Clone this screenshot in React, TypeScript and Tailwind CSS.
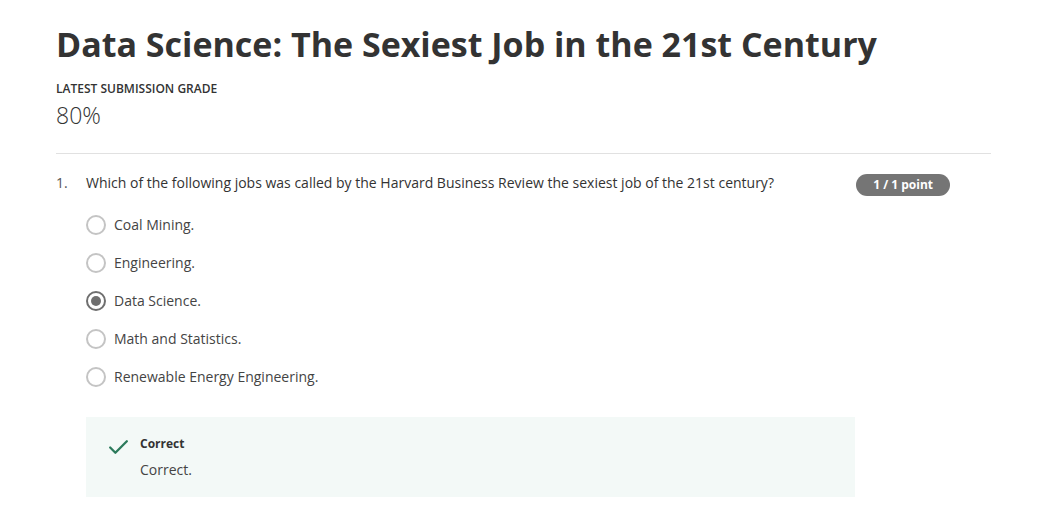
import { Check } from "lucide-react";

const options = [
  { label: "Coal Mining.", checked: false },
  { label: "Engineering.", checked: false },
  { label: "Data Science.", checked: true },
  { label: "Math and Statistics.", checked: false },
  { label: "Renewable Energy Engineering.", checked: false },
];

function Radio({ checked }: { checked: boolean }) {
  return (
    <span
      className={`w-[20px] h-[20px] rounded-full border-2 flex items-center justify-center flex-shrink-0 ${
        checked ? "border-[#6f6f6f]" : "border-[#c4c4c4]"
      }`}
    >
      {checked && <span className="w-[10px] h-[10px] rounded-full bg-[#6f6f6f]" />}
    </span>
  );
}

export default function App() {
  return (
    <div
      className="min-h-screen bg-white text-[#333]"
      style={{ fontFamily: '"Open Sans", "Liberation Sans", sans-serif' }}
    >
      <div className="pl-[56px] pr-[66px] pt-[21px]">
        <h1 className="text-[34px] leading-[46px] font-bold text-[#333]">
          Data Science: The Sexiest Job in the 21st Century
        </h1>

        <div className="mt-[14px] text-[12px] leading-[16px] font-semibold text-[#333] uppercase">
          Latest Submission Grade
        </div>
        <div className="mt-[4px] text-[23px] leading-[28px] font-light text-[#333]">80%</div>

        <div className="mt-[24px] border-t border-[#e1e1e1]" />

        <div className="mt-[19px] flex items-start">
          <span className="w-[30px] text-[14px] leading-[20px] text-[#555]">1.</span>
          <div className="flex-1">
            <div className="flex items-start justify-between">
              <p className="text-[14px] leading-[20px] text-[#333]">
                Which of the following jobs was called by the Harvard Business Review the sexiest job of the 21st century?
              </p>
              <span className="mr-[41px] mt-[1px] h-[22px] px-[17px] rounded-full bg-[#757575] text-white text-[12px] font-bold flex items-center">
                1 / 1 point
              </span>
            </div>

            <div className="mt-[19px] flex flex-col gap-[18px]">
              {options.map((o) => (
                <label key={o.label} className="flex items-center gap-[8px] h-[20px]">
                  <Radio checked={o.checked} />
                  <span className="text-[14px] leading-[20px] text-[#444]">{o.label}</span>
                </label>
              ))}
            </div>

            <div className="mt-[30px] w-[769px] h-[80px] bg-[#f3f9f7] pl-[20px] pt-[18px] flex items-start gap-[9px]">
              <Check className="w-[25px] h-[25px] text-[#2b7a5b]" strokeWidth={2.2} />
              <div>
                <div className="text-[12px] leading-[18px] font-bold text-[#333]">Correct</div>
                <div className="mt-[8px] text-[14px] leading-[18px] text-[#444]">Correct.</div>
              </div>
            </div>
          </div>
        </div>
      </div>
    </div>
  );
}
